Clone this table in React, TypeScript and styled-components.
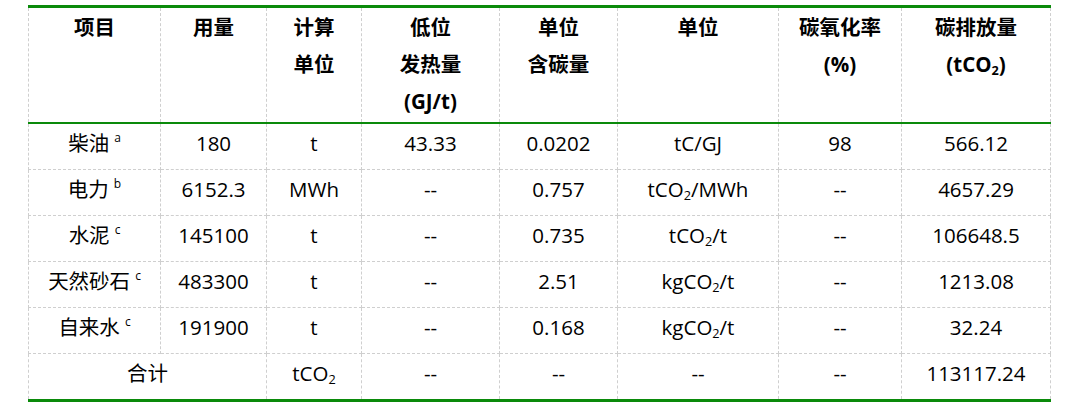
import React from "react";
import styled, { createGlobalStyle } from "styled-components";

const GlobalStyle = createGlobalStyle`
  html, body {
    margin: 0;
    padding: 0;
    background: #fff;
  }
  body {
    font-family: "Open Sans", "Noto Sans CJK SC", sans-serif;
    color: #000;
  }
`;

const GREEN = "#0a8a0a";

const Page = styled.div`
  padding: 5px 0 0 28px;
`;

const Table = styled.table`
  border-collapse: collapse;
  table-layout: fixed;
  width: 1023px;
  font-size: 20.5px;
`;

const HeadCell = styled.th`
  border-left: 1px dashed #cfcfcf;
  border-right: 1px dashed #cfcfcf;
  border-top: 3px solid ${GREEN};
  border-bottom: 2px solid ${GREEN};
  height: 113px;
  padding: 1px 0 0;
  vertical-align: top;
  text-align: center;
  font-weight: 700;
  line-height: 37px;
`;

const Cell = styled.td<{ $last?: boolean }>`
  border: 1px dashed #cfcfcf;
  border-bottom: ${(p) => (p.$last ? `3px solid ${GREEN}` : "1px dashed #cfcfcf")};
  height: 37px;
  padding: 0 0 8px;
  vertical-align: middle;
  text-align: center;
  line-height: 24px;
`;

const Sub = styled.sub`
  font-size: 0.62em;
  vertical-align: -0.25em;
  line-height: 0;
`;

const Note = styled.sup`
  font-size: 12px;
  vertical-align: 0.75em;
  line-height: 0;
  margin-left: 5px;
`;

const CO2 = ({ pre = "t", post = "" }: { pre?: string; post?: string }) => (
  <>
    {pre}CO<Sub>2</Sub>
    {post}
  </>
);

const widths = [132, 106, 95, 138, 118, 161, 123, 149];

interface Row {
  name: string;
  note: string;
  amount: string;
  unit: string;
  heat: string;
  carbon: string;
  factorUnit: React.ReactNode;
  rate: string;
  emission: string;
}

const rows: Row[] = [
  { name: "柴油", note: "a", amount: "180", unit: "t", heat: "43.33", carbon: "0.0202", factorUnit: "tC/GJ", rate: "98", emission: "566.12" },
  { name: "电力", note: "b", amount: "6152.3", unit: "MWh", heat: "--", carbon: "0.757", factorUnit: <CO2 post="/MWh" />, rate: "--", emission: "4657.29" },
  { name: "水泥", note: "c", amount: "145100", unit: "t", heat: "--", carbon: "0.735", factorUnit: <CO2 post="/t" />, rate: "--", emission: "106648.5" },
  { name: "天然砂石", note: "c", amount: "483300", unit: "t", heat: "--", carbon: "2.51", factorUnit: <CO2 pre="kg" post="/t" />, rate: "--", emission: "1213.08" },
  { name: "自来水", note: "c", amount: "191900", unit: "t", heat: "--", carbon: "0.168", factorUnit: <CO2 pre="kg" post="/t" />, rate: "--", emission: "32.24" },
];

export default function App() {
  return (
    <Page>
      <GlobalStyle />
      <Table>
        <colgroup>
          {widths.map((w, i) => (
            <col key={i} style={{ width: w }} />
          ))}
        </colgroup>
        <thead>
          <tr>
            <HeadCell>项目</HeadCell>
            <HeadCell>用量</HeadCell>
            <HeadCell>
              计算
              <br />
              单位
            </HeadCell>
            <HeadCell>
              低位
              <br />
              发热量
              <br />
              (GJ/t)
            </HeadCell>
            <HeadCell>
              单位
              <br />
              含碳量
            </HeadCell>
            <HeadCell>单位</HeadCell>
            <HeadCell>
              碳氧化率
              <br />
              (%)
            </HeadCell>
            <HeadCell>
              碳排放量
              <br />(<CO2 />)
            </HeadCell>
          </tr>
        </thead>
        <tbody>
          {rows.map((r) => (
            <tr key={r.name}>
              <Cell>
                {r.name}
                <Note>{r.note}</Note>
              </Cell>
              <Cell>{r.amount}</Cell>
              <Cell>{r.unit}</Cell>
              <Cell>{r.heat}</Cell>
              <Cell>{r.carbon}</Cell>
              <Cell>{r.factorUnit}</Cell>
              <Cell>{r.rate}</Cell>
              <Cell>{r.emission}</Cell>
            </tr>
          ))}
          <tr>
            <Cell $last colSpan={2}>
              合计
            </Cell>
            <Cell $last>
              <CO2 />
            </Cell>
            <Cell $last>--</Cell>
            <Cell $last>--</Cell>
            <Cell $last>--</Cell>
            <Cell $last>--</Cell>
            <Cell $last>113117.24</Cell>
          </tr>
        </tbody>
      </Table>
    </Page>
  );
}
